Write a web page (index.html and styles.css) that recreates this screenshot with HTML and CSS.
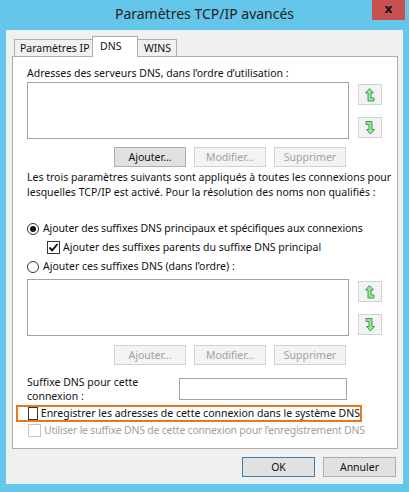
FILE: index.html
```html
<!DOCTYPE html>
<html lang="fr">
<head>
<meta charset="utf-8">
<title>Paramètres TCP/IP avancés</title>
<link rel="stylesheet" href="styles.css">
</head>
<body>
<div class="window">
  <div class="titlebar">
    <div class="title-spacer"></div>
    <div class="title">Paramètres TCP/IP avancés</div>
    <div class="close">x</div>
  </div>
  <div class="client">
    <div class="tabs">
      <div class="tab">Paramètres IP</div>
      <div class="tab selected">DNS</div>
      <div class="tab">WINS</div>
    </div>
    <div class="panel">
      <div class="label">Adresses des serveurs DNS, dans l’ordre d’utilisation :</div>
      <div class="listrow">
        <div class="listbox"></div>
        <div class="arrows">
          <div class="arrowbtn">
            <svg width="10" height="14" viewBox="0 0 10 14"><path d="M4.5 0.5 L8.5 5 L6 5 L6 10 L9 10 L9 13 L3 13 L3 5 L0.5 5 Z" fill="#9fe39f" stroke="#3f9f3f" stroke-width="1" stroke-linejoin="miter"/></svg>
          </div>
          <div class="arrowbtn">
            <svg width="10" height="14" viewBox="0 0 10 14"><path d="M1 0.5 L7 0.5 L7 8.5 L9.5 8.5 L5.5 13 L1.5 8.5 L4 8.5 L4 3.5 L1 3.5 Z" fill="#9fe39f" stroke="#3f9f3f" stroke-width="1" stroke-linejoin="miter"/></svg>
          </div>
        </div>
      </div>
      <div class="btnrow">
        <div class="btn">Ajouter…</div>
        <div class="btn disabled">Modifier…</div>
        <div class="btn disabled">Supprimer</div>
      </div>
      <p class="desc">Les trois paramètres suivants sont appliqués à toutes les connexions pour<br>lesquelles TCP/IP est activé. Pour la résolution des noms non qualifiés :</p>
      <div class="opts">
        <div class="opt"><span class="radio on"></span><span class="tight">Ajouter des suffixes DNS principaux et spécifiques aux connexions</span></div>
        <div class="opt sub"><span class="check on"><svg width="11" height="11" viewBox="0 0 11 11"><path d="M1.5 5.5 L4.2 8.3 L9.5 2" fill="none" stroke="#111" stroke-width="1.9"/></svg></span><span>Ajouter des suffixes parents du suffixe DNS principal</span></div>
        <div class="opt"><span class="radio"></span><span>Ajouter ces suffixes DNS (dans l’ordre) :</span></div>
      </div>
      <div class="listrow second">
        <div class="listbox"></div>
        <div class="arrows">
          <div class="arrowbtn">
            <svg width="10" height="14" viewBox="0 0 10 14"><path d="M4.5 0.5 L8.5 5 L6 5 L6 10 L9 10 L9 13 L3 13 L3 5 L0.5 5 Z" fill="#9fe39f" stroke="#3f9f3f" stroke-width="1" stroke-linejoin="miter"/></svg>
          </div>
          <div class="arrowbtn">
            <svg width="10" height="14" viewBox="0 0 10 14"><path d="M1 0.5 L7 0.5 L7 8.5 L9.5 8.5 L5.5 13 L1.5 8.5 L4 8.5 L4 3.5 L1 3.5 Z" fill="#9fe39f" stroke="#3f9f3f" stroke-width="1" stroke-linejoin="miter"/></svg>
          </div>
        </div>
      </div>
      <div class="btnrow second">
        <div class="btn disabled">Ajouter…</div>
        <div class="btn disabled">Modifier…</div>
        <div class="btn disabled">Supprimer</div>
      </div>
      <div class="suffix">
        <div class="suffix-label">Suffixe DNS pour cette<br>connexion :</div>
        <div class="textbox"></div>
      </div>
      <div class="opt highlight"><span class="check"></span><span>Enregistrer les adresses de cette connexion dans le système DNS</span></div>
      <div class="opt disabled-opt"><span class="check dis"></span><span class="tighter">Utiliser le suffixe DNS de cette connexion pour l’enregistrement DNS</span></div>
    </div>
    <div class="actions">
      <div class="btn default">OK</div>
      <div class="btn">Annuler</div>
    </div>
  </div>
</div>
</body>
</html>
```
FILE: styles.css
```css
* { box-sizing: border-box; }
html, body { margin: 0; padding: 0; }
body {
  width: 409px;
  height: 492px;
  background: #63c6ea;
  font-family: "Noto Sans", "Open Sans", sans-serif;
  font-size: 10.5px;
  color: #111;
  overflow: hidden;
}
.window { width: 409px; height: 492px; }
.titlebar {
  height: 30px;
  display: flex;
  align-items: flex-start;
}
.title-spacer { width: 37px; }
.title {
  flex: 1;
  text-align: center;
  font-size: 14px;
  line-height: 28px;
  color: #222;
}
.close {
  width: 33px;
  height: 20px;
  margin-right: 4px;
  background: #c75050;
  color: #111;
  font-weight: bold;
  font-size: 13px;
  line-height: 17px;
  text-align: center;
  font-family: "DejaVu Sans", sans-serif;
}
.client {
  margin: 0 6px;
  height: 454px;
  background: #f0f0f0;
  padding: 6px 5px 0 6px;
}
.tabs {
  display: flex;
  align-items: flex-end;
  padding-left: 2px;
  height: 20px;
}
.tab {
  height: 17px;
  border: 1px solid #adadad;
  border-bottom: none;
  background: #f0f0f0;
  padding: 0 0 0 5px;
  line-height: 16px;
  margin-right: -1px;
  white-space: nowrap;
}
.tab:first-child { width: 79px; }
.tab.selected {
  position: relative;
  z-index: 1;
  height: 21px;
  margin-bottom: -1px;
  background: #fff;
  width: 46px;
  padding-left: 7px;
  line-height: 18px;
}
.tab:last-child { width: 40px; padding-left: 6px; }
.panel {
  background: #fff;
  border: 1px solid #adadad;
  padding: 9px 14px 10px 14px;
  height: 393px;
}
.label, .desc, .opt { line-height: 15px; white-space: nowrap; }
.tight { letter-spacing: -0.1px; }
.tighter { letter-spacing: -0.22px; }
.listrow {
  display: flex;
  margin-top: 1px;
}
.listrow.second { margin-top: 3px; }
.listbox {
  width: 322px;
  height: 57px;
  border: 1px solid #a3a3a3;
  background: #fff;
}
.arrows {
  margin-left: 9px;
  display: flex;
  flex-direction: column;
  justify-content: space-between;
  padding: 2px 0 1px;
}
.arrowbtn {
  width: 24px;
  height: 21px;
  border: 1px solid #d2d2d2;
  background: #f3f3f3;
  display: flex;
  align-items: center;
  justify-content: center;
}
.btnrow {
  width: 322px;
  display: flex;
  justify-content: flex-end;
  gap: 8px;
  padding-right: 3px;
  margin-top: 8px;
}
.btnrow.second { margin-top: 9px; }
.btn {
  width: 72px;
  height: 20px;
  border: 1px solid #adadad;
  background: #e1e1e1;
  text-align: center;
  line-height: 18px;
  color: #111;
}
.btn.disabled {
  background: #f3f3f3;
  border-color: #d3d3d3;
  color: #a2a2a2;
}
.desc { margin: 3px 0 0; }
.opts { margin-top: 19px; }
.opt {
  display: flex;
  align-items: center;
  height: 19px;
}
.opt.sub { padding-left: 20px; }
.radio {
  width: 12px;
  height: 12px;
  border: 1px solid #333;
  border-radius: 50%;
  margin-right: 4px;
  display: flex;
  align-items: center;
  justify-content: center;
  background: #fff;
}
.radio.on::after {
  content: "";
  width: 6px;
  height: 6px;
  border-radius: 50%;
  background: #111;
}
.check {
  width: 13px;
  height: 13px;
  border: 1px solid #333;
  background: #fff;
  margin-right: 3px;
  display: flex;
  align-items: center;
  justify-content: center;
}
.check.dis { border-color: #c6c6c6; }
.suffix {
  display: flex;
  align-items: center;
  margin-top: 10px;
  height: 28px;
}
.suffix-label {
  width: 152px;
  line-height: 14px;
  white-space: nowrap;
}
.textbox {
  width: 168px;
  height: 22px;
  border: 1px solid #a3a3a3;
  background: #fff;
}
.opt.highlight {
  margin-top: 2px;
  margin-left: -11px;
  width: 346px;
  height: 17px;
  border: 2px solid #e8771f;
  padding-left: 10px;
}
.opt.disabled-opt {
  height: 16px;
  padding-left: 1px;
  color: #a0a0a0;
}
.actions {
  display: flex;
  justify-content: flex-end;
  gap: 8px;
  margin-top: 8px;
  padding-right: 2px;
}
.actions .btn { width: 73px; }
.btn.default { border-color: #3c7fb1; }
```
